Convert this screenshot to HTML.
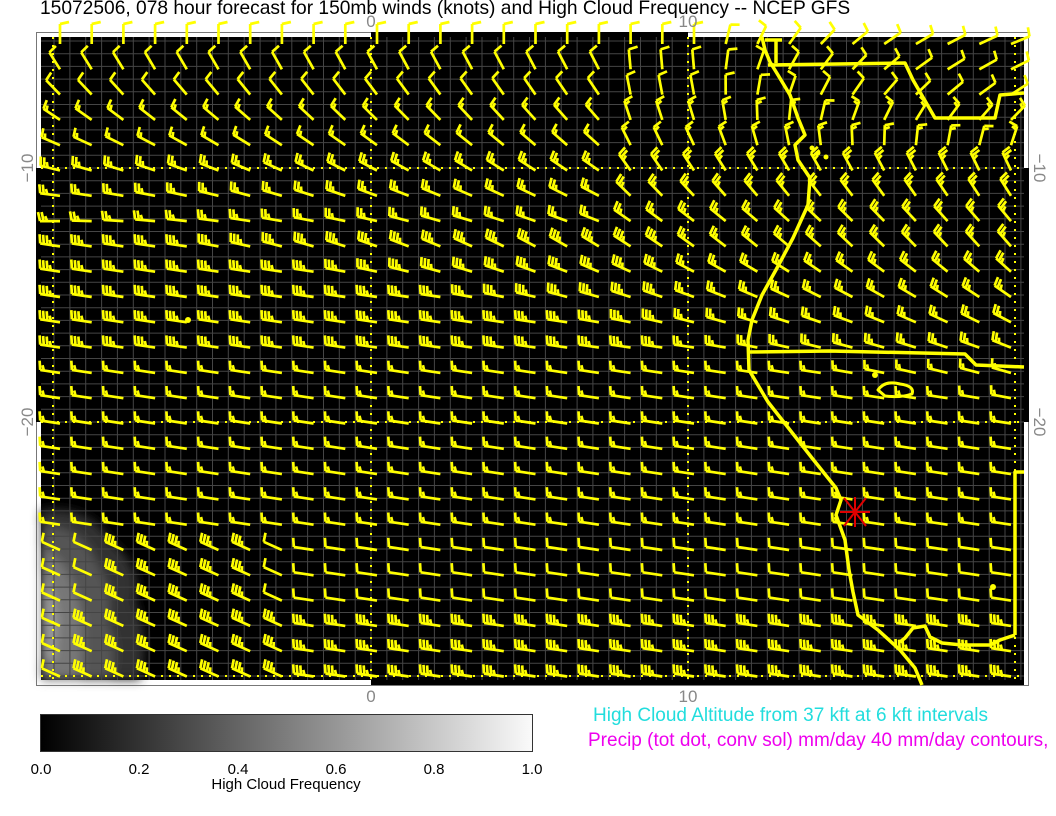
<!DOCTYPE html>
<html><head><meta charset="utf-8"><style>
html,body{margin:0;padding:0;background:#fff;width:1056px;height:816px;overflow:hidden;font-family:"Liberation Sans",sans-serif}
svg{position:absolute;left:0;top:0}
</style></head><body>
<svg id="m" width="1056" height="816" xmlns="http://www.w3.org/2000/svg">
<defs>
<filter id="bl" x="-50%" y="-50%" width="200%" height="200%"><feGaussianBlur stdDeviation="5"/></filter>
<linearGradient id="cb" x1="0" x2="1" y1="0" y2="0"><stop offset="0" stop-color="#000"/><stop offset="1" stop-color="#fafafa"/></linearGradient>
</defs>
<text x="40" y="14" font-size="19.2" fill="#000" font-family="Liberation Sans">15072506, 078 hour forecast for 150mb winds (knots) and High Cloud Frequency -- NCEP GFS</text>
<rect x="36.5" y="32.5" width="992" height="653" fill="#fff" stroke="#777" stroke-width="1"/>
<rect x="371" y="32" width="317" height="5" fill="#000"/>
<rect x="371" y="680" width="653" height="5" fill="#000"/>
<rect x="36" y="168" width="5" height="254" fill="#000"/>
<rect x="1024" y="168" width="5" height="254" fill="#000"/>
<rect x="41" y="37" width="983" height="643" fill="#000"/>
<g filter="url(#bl)">
<path d="M41 510 Q90 505 110 540 Q145 570 135 600 Q150 640 140 680 L41 680Z" fill="#333"/>
<path d="M41 525 Q80 525 95 560 Q115 590 108 620 Q120 650 110 680 L41 680Z" fill="#555"/>
<path d="M41 545 Q65 560 75 590 Q88 620 80 680 L41 680Z" fill="#777"/>
<path d="M41 570 Q55 590 58 620 L55 660 L41 660Z" fill="#999"/>
</g>
<g id="grid" stroke="#454545" stroke-width="1"></g>
<g id="dots" stroke="#ffff00" stroke-width="2" stroke-dasharray="2 6" fill="none">
<line x1="53" y1="37" x2="53" y2="680"/><line x1="371" y1="37" x2="371" y2="680"/><line x1="688" y1="37" x2="688" y2="680"/><line x1="1015" y1="37" x2="1015" y2="680"/>
<line x1="41" y1="168" x2="1024" y2="168"/><line x1="41" y1="422" x2="1024" y2="422"/><line x1="41" y1="676" x2="1024" y2="676"/>
</g>
<g id="coast" stroke="#ffff00" stroke-width="3.5" fill="none" stroke-linejoin="round">
<path d="M762 37 L765 50 L770 62 L778 75 L790 95 L798 118 L805 135 L795 145 L798 160 L810 178 L808 205 L793 238 L777 268 L762 295 L752 320 L748 340 L749 370 L768 402 L790 430 L812 458 L836 488 L841 500 L836 515 L845 540 L849 570 L853 592 L858 615 L878 630 L900 650 L915 668 L922 685"/>
<path d="M765 40 L782 40 M776 40 L776 63 M768 65 L905 63 L913 80 L935 118 L995 118 L1000 95 L1024 93"/>
<path d="M748 352 L830 351 L965 354 L976 365 L1024 367"/>
<path d="M1015 635 L1015 472 L1024 472 M1015 635 L1000 640 L990 645 L962 645 L942 643 L930 637 L925 626 L913 628 L905 638 L900 642"/>
<path d="M878 390 Q885 380 900 384 Q915 386 912 394 Q900 398 885 396 Z" stroke-width="3"/>
</g>
<g fill="#ffff00"><circle cx="875" cy="375" r="3"/><circle cx="993" cy="587" r="3"/><circle cx="188" cy="320" r="3"/><circle cx="812" cy="148" r="2.5"/><circle cx="818" cy="153" r="2.5"/><circle cx="826" cy="157" r="2.5"/></g>
<g id="barbs" stroke="#ffff00" stroke-width="2.7" fill="none" stroke-linecap="butt"></g>
<g stroke="#e00000" stroke-width="2"><line x1="840" y1="512" x2="870" y2="512"/><line x1="855" y1="497" x2="855" y2="527"/><line x1="844" y1="498" x2="866" y2="526"/><line x1="866" y1="498" x2="844" y2="526"/></g>
<g font-family="Liberation Sans" font-size="17" fill="#888">
<text x="371" y="27" text-anchor="middle">0</text><text x="688" y="27" text-anchor="middle">10</text>
<text x="371" y="702" text-anchor="middle">0</text><text x="688" y="702" text-anchor="middle">10</text>
<text transform="translate(33,168) rotate(-90)" text-anchor="middle">−10</text>
<text transform="translate(33,422) rotate(-90)" text-anchor="middle">−20</text>
<text transform="translate(1034,168) rotate(90)" text-anchor="middle">−10</text>
<text transform="translate(1034,422) rotate(90)" text-anchor="middle">−20</text>
</g>
<rect x="40.5" y="714.5" width="492" height="37" fill="url(#cb)" stroke="#333" stroke-width="1"/>
<g font-family="Liberation Sans" font-size="15" fill="#000" text-anchor="middle">
<text x="41" y="774">0.0</text><text x="139" y="774">0.2</text><text x="238" y="774">0.4</text><text x="336" y="774">0.6</text><text x="434" y="774">0.8</text><text x="532" y="774">1.0</text>
<text x="286" y="789" font-size="15">High Cloud Frequency</text>
</g>
<text x="593" y="721" font-family="Liberation Sans" font-size="19" fill="#22dddd">High Cloud Altitude from 37 kft at 6 kft intervals</text>
<text x="588" y="746" font-family="Liberation Sans" font-size="19" fill="#ee00ee">Precip (tot dot, conv sol) mm/day 40 mm/day contours,</text>
</svg>
<script>
(function(){
var g='';
for(var x=371-15.85*21;x<1024;x+=15.85){if(x>41)g+='<line x1="'+x.toFixed(1)+'" y1="37" x2="'+x.toFixed(1)+'" y2="680"/>';}
for(var y=168-12.7*10;y<680;y+=12.7){if(y>37)g+='<line x1="41" y1="'+y.toFixed(1)+'" x2="1024" y2="'+y.toFixed(1)+'"/>';}
document.getElementById('grid').innerHTML=g;
var b='';
for(var j=0;j<26;j++){for(var i=0;i<31;i++){
 var x0=60+31.7*i,y0=44+25.3*j;
 var ax,ay;
 var dn=7+i/4;
 ay=Math.max(0,1-j/dn)*1.3;
 ax=-Math.min(1,j/(5+i/4))-(i<18&&j>0&&j<8?0.5:0);
 if(i>20){ax+=Math.max(0,(i-20)/7)*Math.max(0,1-j/5)*2.2;}
 if(j>=8) ay+=0.15;
 if(j>=20&&i<8) ay+=0.3;
 var L=Math.sqrt(ax*ax+ay*ay)||1;
 var tx=ax/L,ty=-ay/L;
 var px=-ty,py=tx;
 if(py>0.3){px=-px;py=-py;}
 var n;
 if(j<3)n=1;else if(j<5)n=2;else if(j<8)n=3;
 else if(j<13)n=(i<20?4:3);
 else if(j<20)n=2;
 else if(j<23)n=(i>=2&&i<=6)?4:1;
 else n=(i==0)?1:4;
 var sl=20;
 var x1=x0+tx*sl,y1=y0+ty*sl;
 b+='<line x1="'+x0.toFixed(1)+'" y1="'+y0.toFixed(1)+'" x2="'+x1.toFixed(1)+'" y2="'+y1.toFixed(1)+'"/>';
 for(var k=0;k<n;k++){
  var d=k*3.6;
  var bx=x1-tx*d,by=y1-ty*d;
  var bl=(k==n-1&&n>1)?5:9;
  var ex=bx+px*bl+tx*2,ey=by+py*bl+ty*2;
  b+='<line x1="'+bx.toFixed(1)+'" y1="'+by.toFixed(1)+'" x2="'+ex.toFixed(1)+'" y2="'+ey.toFixed(1)+'"/>';
 }
}}
document.getElementById('barbs').innerHTML=b;
})();
</script>
</body></html>
